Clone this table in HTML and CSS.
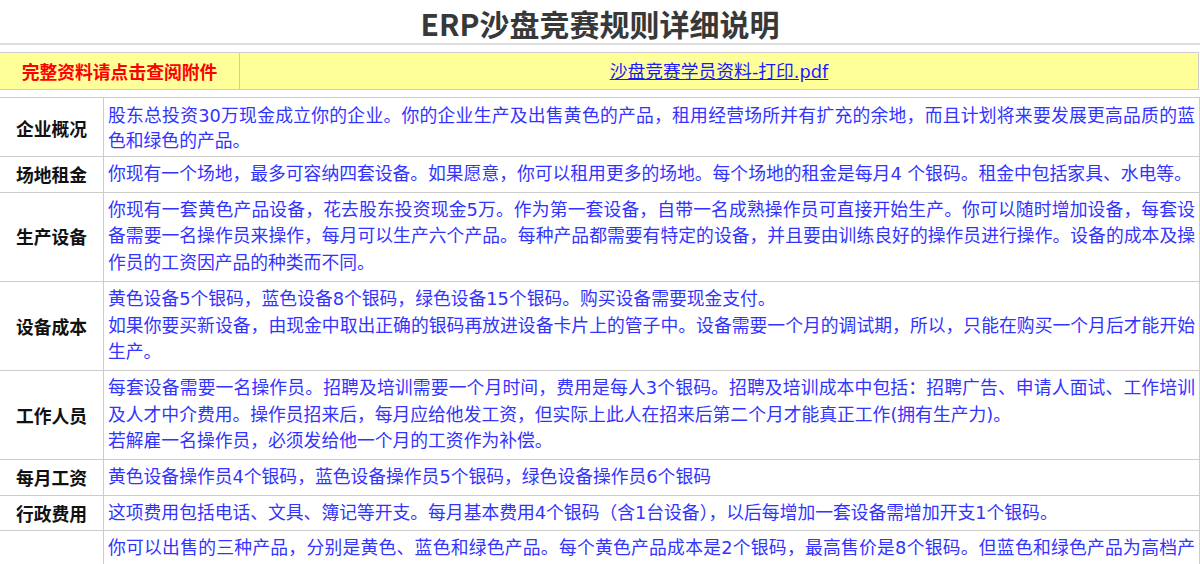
FILE: index.html
```html
<!DOCTYPE html>
<html lang="zh-CN">
<head>
<meta charset="utf-8">
<title>ERP沙盘竞赛规则详细说明</title>
<link rel="stylesheet" href="styles.css">
</head>
<body>
<h1 class="title">ERP沙盘竞赛规则详细说明</h1>
<table class="attach">
  <tr>
    <td class="attach-label">完整资料请点击查阅附件</td>
    <td class="attach-link"><a href="#">沙盘竞赛学员资料-打印.pdf</a></td>
  </tr>
</table>
<table class="rules">
  <tr class="row-first">
    <th>企业概况</th>
    <td>股东总投资30万现金成立你的企业。你的企业生产及出售黄色的产品，租用经营场所并有扩充的余地，而且计划将来要发展更高品质的蓝色和绿色的产品。</td>
  </tr>
  <tr>
    <th>场地租金</th>
    <td>你现有一个场地，最多可容纳四套设备。如果愿意，你可以租用更多的场地。每个场地的租金是每月4 个银码。租金中包括家具、水电等。</td>
  </tr>
  <tr>
    <th>生产设备</th>
    <td>你现有一套黄色产品设备，花去股东投资现金5万。作为第一套设备，自带一名成熟操作员可直接开始生产。你可以随时增加设备，每套设备需要一名操作员来操作，每月可以生产六个产品。每种产品都需要有特定的设备，并且要由训练良好的操作员进行操作。设备的成本及操作员的工资因产品的种类而不同。</td>
  </tr>
  <tr>
    <th>设备成本</th>
    <td>黄色设备5个银码，蓝色设备8个银码，绿色设备15个银码。购买设备需要现金支付。<br>如果你要买新设备，由现金中取出正确的银码再放进设备卡片上的管子中。设备需要一个月的调试期，所以，只能在购买一个月后才能开始生产。</td>
  </tr>
  <tr>
    <th>工作人员</th>
    <td>每套设备需要一名操作员。招聘及培训需要一个月时间，费用是每人3个银码。招聘及培训成本中包括：招聘广告、申请人面试、工作培训及人才中介费用。操作员招来后，每月应给他发工资，但实际上此人在招来后第二个月才能真正工作(拥有生产力)。<br>若解雇一名操作员，必须发给他一个月的工资作为补偿。</td>
  </tr>
  <tr>
    <th>每月工资</th>
    <td>黄色设备操作员4个银码，蓝色设备操作员5个银码，绿色设备操作员6个银码</td>
  </tr>
  <tr>
    <th>行政费用</th>
    <td>这项费用包括电话、文具、簿记等开支。每月基本费用4个银码（含1台设备），以后每增加一套设备需增加开支1个银码。</td>
  </tr>
  <tr>
    <th>产品销售</th>
    <td>你可以出售的三种产品，分别是黄色、蓝色和绿色产品。每个黄色产品成本是2个银码，最高售价是8个银码。但蓝色和绿色产品为高档产品，生产成本分别是3个银码和4个银码，最高售价分别是12个银码和15个银码。产品的销售需要市场开拓，每个市场的需求量有限，你需要根据市场预测合理安排生产和销售，以获得最大的利润。</td>
  </tr>
</table>
</body>
</html>
```

FILE: styles.css
```css
html, body {
  margin: 0;
  padding: 0;
  background: #ffffff;
}

body {
  font-family: "Noto Sans CJK SC", "Noto Sans", sans-serif;
  font-size: 17.8px;
  overflow: hidden;
}

.title {
  margin: 0;
  height: 43px;
  line-height: 47px;
  font-size: 30px;
  font-weight: 700;
  color: #383838;
  text-align: center;
  border-bottom: 2px solid #dddddd;
}

.attach {
  border-collapse: separate;
  border-spacing: 0;
  width: 1200px;
  margin: 7px 0 0 -1px;
  border-top: 1px solid #cccccc;
  border-left: 1px solid #cccccc;
  background: #ffff99;
}

.attach td {
  height: 34px;
  padding: 0;
  text-align: center;
  vertical-align: middle;
  border-right: 1px solid #cccccc;
  border-bottom: 1px solid #cccccc;
  line-height: 34px;
}

.attach-label {
  width: 239px;
  color: #ff0000;
  font-weight: 700;
}

.attach-link a {
  font-family: "DejaVu Sans", "Noto Sans CJK SC", sans-serif;
  color: #1a1aff;
  text-decoration: underline;
}

.rules {
  border-collapse: separate;
  border-spacing: 0;
  table-layout: fixed;
  width: 1201px;
  margin: 7px 0 0 -1px;
  border-top: 1px solid #cccccc;
  border-left: 1px solid #cccccc;
}

.rules th,
.rules td {
  border-right: 1px solid #cccccc;
  border-bottom: 1px solid #cccccc;
  padding: 4px;
  line-height: 26.7px;
  vertical-align: middle;
}

.rules th {
  width: 95px;
  font-weight: 700;
  color: #111111;
  text-align: center;
  white-space: nowrap;
}

.rules td {
  font-family: "DejaVu Sans", "Noto Sans CJK SC", sans-serif;
  color: #3333ff;
  text-align: justify;
}

.rules .row-first th,
.rules .row-first td {
  line-height: 25px;
  padding-top: 5px;
  padding-bottom: 3px;
}
```
